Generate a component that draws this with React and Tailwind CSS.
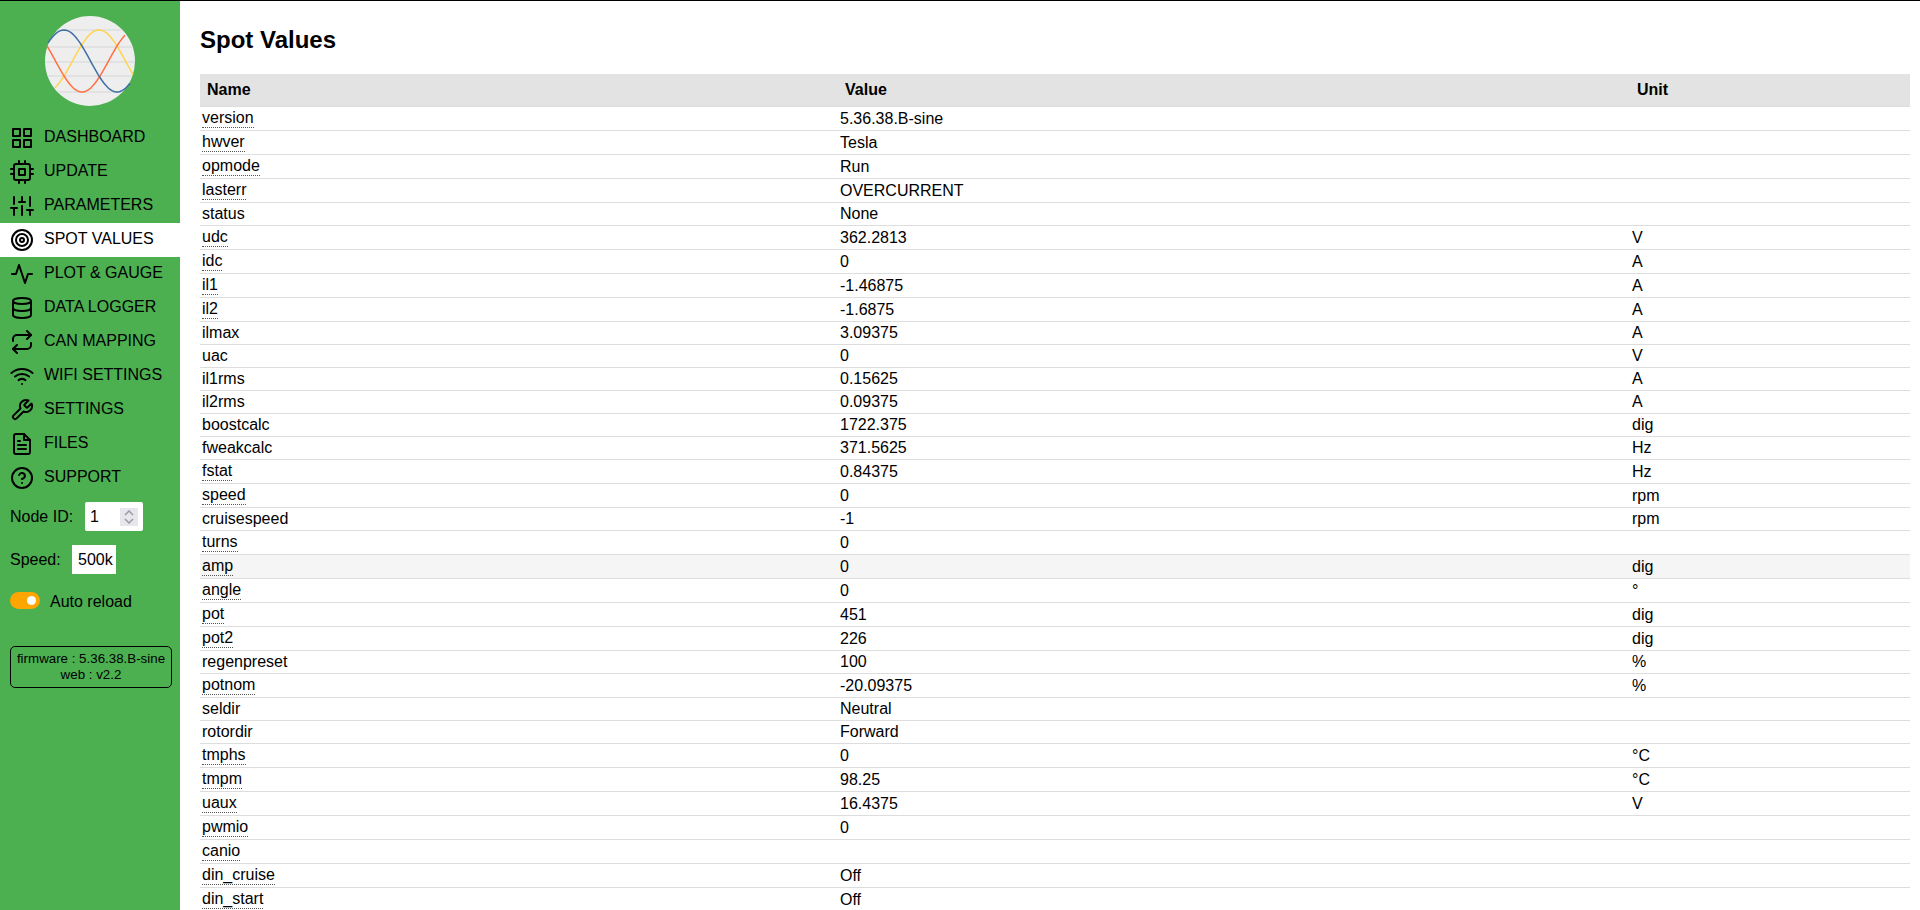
import React from "react";

const rows = [
  ["version", "5.36.38.B-sine", "", true],
  ["hwver", "Tesla", "", true],
  ["opmode", "Run", "", true],
  ["lasterr", "OVERCURRENT", "", true],
  ["status", "None", "", false],
  ["udc", "362.2813", "V", true],
  ["idc", "0", "A", true],
  ["il1", "-1.46875", "A", true],
  ["il2", "-1.6875", "A", true],
  ["ilmax", "3.09375", "A", false],
  ["uac", "0", "V", false],
  ["il1rms", "0.15625", "A", false],
  ["il2rms", "0.09375", "A", false],
  ["boostcalc", "1722.375", "dig", false],
  ["fweakcalc", "371.5625", "Hz", false],
  ["fstat", "0.84375", "Hz", true],
  ["speed", "0", "rpm", true],
  ["cruisespeed", "-1", "rpm", false],
  ["turns", "0", "", true],
  ["amp", "0", "dig", true],
  ["angle", "0", "°", true],
  ["pot", "451", "dig", true],
  ["pot2", "226", "dig", true],
  ["regenpreset", "100", "%", false],
  ["potnom", "-20.09375", "%", true],
  ["seldir", "Neutral", "", false],
  ["rotordir", "Forward", "", false],
  ["tmphs", "0", "°C", true],
  ["tmpm", "98.25", "°C", true],
  ["uaux", "16.4375", "V", true],
  ["pwmio", "0", "", true],
  ["canio", "", "", true],
  ["din_cruise", "Off", "", true],
  ["din_start", "Off", "", true],
];

const Icon = ({ children }) => (
  <svg width="24" height="24" viewBox="0 0 24 24" fill="none" stroke="currentColor" strokeWidth="2" strokeLinecap="round" strokeLinejoin="round" className="shrink-0">
    {children}
  </svg>
);

const nav = [
  ["DASHBOARD", <><rect x="3" y="3" width="7" height="7" /><rect x="14" y="3" width="7" height="7" /><rect x="14" y="14" width="7" height="7" /><rect x="3" y="14" width="7" height="7" /></>],
  ["UPDATE", <><rect x="4" y="4" width="16" height="16" rx="2" /><rect x="9" y="9" width="6" height="6" /><path d="M9 1v3M15 1v3M9 20v3M15 20v3M20 9h3M20 14h3M1 9h3M1 14h3" /></>],
  ["PARAMETERS", <path d="M4 21v-7M4 10V3M12 21v-9M12 8V3M20 21v-5M20 12V3M1 14h6M9 8h6M17 16h6" />],
  ["SPOT VALUES", <><circle cx="12" cy="12" r="10" /><circle cx="12" cy="12" r="6" /><circle cx="12" cy="12" r="2" /></>],
  ["PLOT & GAUGE", <polyline points="22 12 18 12 15 21 9 3 6 12 2 12" />],
  ["DATA LOGGER", <><ellipse cx="12" cy="5" rx="9" ry="3" /><path d="M21 12c0 1.66-4 3-9 3s-9-1.34-9-3" /><path d="M3 5v14c0 1.66 4 3 9 3s9-1.34 9-3V5" /></>],
  ["CAN MAPPING", <><polyline points="17 1 21 5 17 9" /><path d="M3 11V9a4 4 0 0 1 4-4h14" /><polyline points="7 23 3 19 7 15" /><path d="M21 13v2a4 4 0 0 1-4 4H3" /></>],
  ["WIFI SETTINGS", <><path d="M5 12.55a11 11 0 0 1 14.08 0" /><path d="M1.42 9a16 16 0 0 1 21.16 0" /><path d="M8.53 16.11a6 6 0 0 1 6.95 0" /><path d="M12 20h.01" /></>],
  ["SETTINGS", <path d="M14.7 6.3a1 1 0 0 0 0 1.4l1.6 1.6a1 1 0 0 0 1.4 0l3.77-3.77a6 6 0 0 1-7.94 7.94l-6.91 6.91a2.12 2.12 0 0 1-3-3l6.91-6.91a6 6 0 0 1 7.94-7.94l-3.76 3.76z" />],
  ["FILES", <><path d="M14 2H6a2 2 0 0 0-2 2v16a2 2 0 0 0 2 2h12a2 2 0 0 0 2-2V8z" /><polyline points="14 2 14 8 20 8" /><path d="M16 13H8M16 17H8M10 9H8" /></>],
  ["SUPPORT", <><circle cx="12" cy="12" r="10" /><path d="M9.09 9a3 3 0 0 1 5.83 1c0 2-3 3-3 3" /><path d="M12 17h.01" /></>],
];

// sine traces of the logo, in page coordinates minus the circle's corner
const trace = (peak, from, to, sign) => {
  const pts = [];
  for (let x = from; x <= to; x += 2) {
    const y = 61 - sign * 31 * Math.cos((2 * Math.PI * (x - peak)) / 106);
    pts.push(`${x - 45},${(y - 16).toFixed(1)}`);
  }
  return pts.join(" ");
};

function Logo() {
  return (
    <svg width="90" height="90" viewBox="0 0 90 90" className="block">
      <defs>
        <clipPath id="logo-clip">
          <circle cx="45" cy="45" r="45" />
        </clipPath>
      </defs>
      <circle cx="45" cy="45" r="45" fill="#eeeeee" />
      <g clipPath="url(#logo-clip)">
        {[14, 31, 46, 60, 76].map((y) => (
          <line key={y} x1="0" x2="90" y1={y} y2={y} stroke="#dedede" strokeWidth="1.5" />
        ))}
      </g>
      <polyline points={trace(99, 55, 133, 1)} fill="none" stroke="#ffd54f" strokeWidth="1.5" />
      <polyline points={trace(82, 47, 126, -1)} fill="none" stroke="#ff7043" strokeWidth="1.5" />
      <polyline points={trace(64, 48, 130, 1)} fill="none" stroke="#3f6fa5" strokeWidth="1.5" />
    </svg>
  );
}

export default function App() {
  return (
    <div className="h-[910px] overflow-hidden border-t border-black bg-white flex text-black text-base font-['Liberation_Sans',Arial,sans-serif]">
      {/* Sidebar */}
      <aside className="w-[180px] shrink-0 bg-[#4caf50]">
        <div className="flex justify-center pt-[15px] pb-[15px]">
          <Logo />
        </div>
        <nav>
          {nav.map(([label, icon]) => (
            <div key={label} className={`h-[34px] pl-[10px] flex items-center gap-[10px] ${label === "SPOT VALUES" ? "bg-white" : ""}`}>
              <Icon>{icon}</Icon>
              <span className="mb-[3px]">{label}</span>
            </div>
          ))}
        </nav>
        <div className="mt-[7px] pl-[10px] flex items-center h-[29px]">
          <span className="w-[75px]">Node ID:</span>
          <div className="relative w-[58px] h-[29px]">
            <input
              type="number"
              defaultValue="1"
              className="w-full h-full bg-white rounded-[2px] pl-[5px] outline-none appearance-none [&::-webkit-inner-spin-button]:appearance-none"
            />
            <div className="absolute left-[35px] top-[6px] w-[18px] h-[18px] bg-[#e6e6ec] flex flex-col items-center justify-center gap-[2px]">
              <svg width="10" height="6" viewBox="0 0 10 6" fill="none" stroke="#9a9aa2" strokeWidth="1.5"><path d="M1 5l4-4 4 4" /></svg>
              <svg width="10" height="6" viewBox="0 0 10 6" fill="none" stroke="#9a9aa2" strokeWidth="1.5"><path d="M1 1l4 4 4-4" /></svg>
            </div>
          </div>
        </div>
        <div className="mt-[14px] pl-[10px] flex items-center h-[29px]">
          <span className="w-[62px]">Speed:</span>
          <div className="w-[44px] h-[29px] bg-white flex items-center pl-[6px]">500k</div>
        </div>
        <div className="mt-[18px] pl-[10px] flex items-center h-[17px]">
          <div className="relative w-[30px] h-[17px] rounded-full bg-[#ffa500]">
            <span className="absolute left-[17px] top-[4px] w-[9px] h-[9px] rounded-full bg-white" />
          </div>
          <span className="ml-[10px] mt-[2px]">Auto reload</span>
        </div>
        <div className="mt-[37px] ml-[10px] w-[162px] h-[42px] border border-black rounded-[5px] text-[13.33px] leading-[16px] text-center flex flex-col justify-center">
          <div>firmware : 5.36.38.B-sine</div>
          <div>web : v2.2</div>
        </div>
      </aside>

      {/* Main */}
      <main className="flex-1 pl-[20px] pr-[10px]">
        <h1 className="text-2xl font-bold leading-[28px] mt-[25px] mb-[20px]">Spot Values</h1>
        <table className="w-full table-fixed border-collapse">
          <colgroup>
            <col className="w-[638px]" />
            <col className="w-[792px]" />
            <col />
          </colgroup>
          <thead>
            <tr className="bg-[#e3e3e3] border-b border-[#dddddd]">
              <th className="h-[32px] px-[7px] text-left font-bold">Name</th>
              <th className="h-[32px] px-[7px] text-left font-bold">Value</th>
              <th className="h-[32px] px-[7px] text-left font-bold">Unit</th>
            </tr>
          </thead>
          <tbody>
            {rows.map(([name, value, unit, dotted]) => (
              <tr key={name} className={`border-b border-[#dddddd] ${name === "amp" ? "bg-[#f5f5f5]" : ""}`}>
                <td className="px-[2px] py-[2px] leading-[18px] align-top">
                  <span className={`inline-block align-top ${dotted ? "border-b border-dotted border-[#555555]" : ""}`}>{name}</span>
                </td>
                <td className="px-[2px] py-[2px] leading-[18px] align-bottom">{value}</td>
                <td className="px-[2px] py-[2px] leading-[18px] align-bottom">{unit}</td>
              </tr>
            ))}
          </tbody>
        </table>
      </main>
    </div>
  );
}
